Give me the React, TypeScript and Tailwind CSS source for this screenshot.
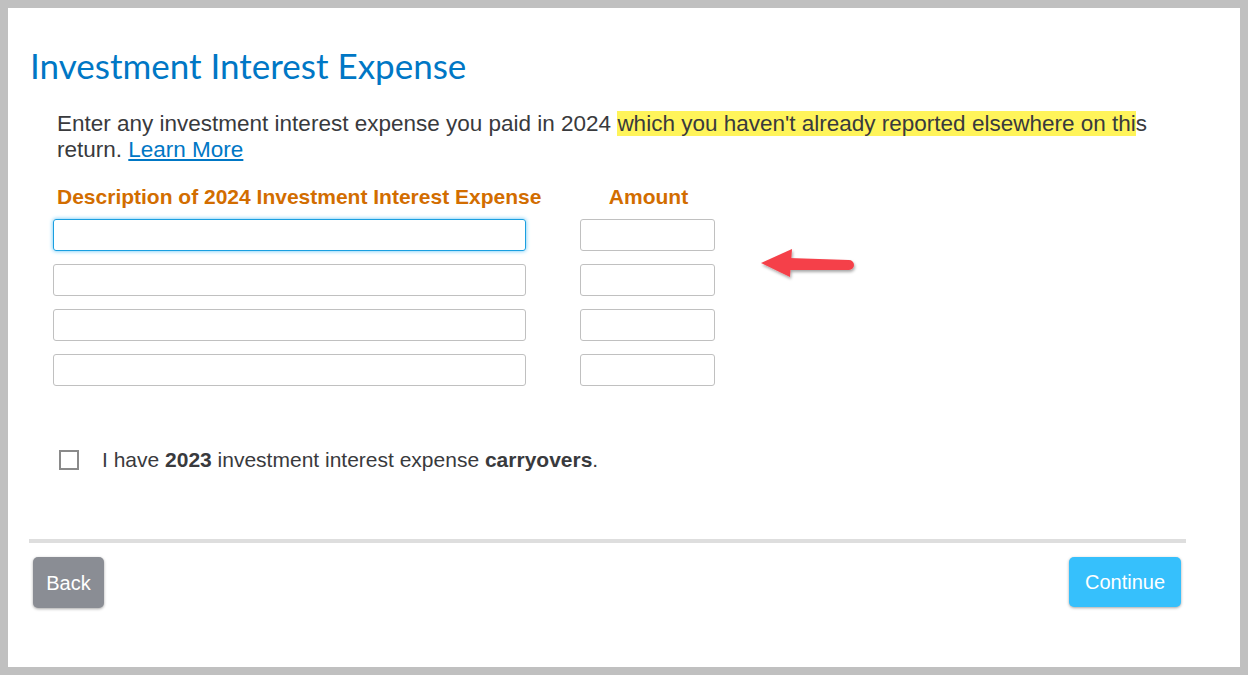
import React from 'react';

const rows = [0, 1, 2, 3];

function Arrow() {
  return (
    <svg width="100" height="40" viewBox="0 0 100 40" className="overflow-visible">
      <defs>
        <filter id="sh" x="-20%" y="-40%" width="140%" height="180%">
          <feDropShadow dx="1" dy="2" stdDeviation="1.5" floodColor="#000" floodOpacity="0.35" />
        </filter>
      </defs>
      <g filter="url(#sh)">
        <path d="M28 18 L88 20 A5 5 0 0 1 88 30 L28 30 Z" fill="#f5414a" />
        <path d="M0 23 L31 9 L29 37 Z" fill="#f5414a" />
      </g>
    </svg>
  );
}

export default function App() {
  return (
    <div className="w-[1248px] h-[675px] bg-[#c0c0c0] p-2" style={{ fontFamily: '"Liberation Sans", Arial, sans-serif' }}>
      <div className="bg-white h-full pl-[22px] pt-[36px]">
        <h1 className="text-[35px] leading-[42px] text-[#0077c5]" style={{ fontFamily: 'Lato, sans-serif' }}>
          Investment Interest Expense
        </h1>

        <p className="mt-[25px] ml-[27px] w-[1110px] text-[22.5px] leading-[25.5px] text-[#393a3d]">
          Enter any investment interest expense you paid in 2024{' '}
          <span className="bg-[#fff45a]">which you haven't already reported elsewhere on thi</span>s return.{' '}
          <a href="#" className="text-[#0077c5] underline">Learn More</a>
        </p>

        <div className="mt-[23px] ml-[23px] flex items-start">
          <div className="w-[473px] flex flex-col">
            <div className="ml-[4px] h-[24px] whitespace-nowrap text-[21px] font-bold text-[#d26d00] leading-[24px]">
              Description of 2024 Investment Interest Expense
            </div>
            <div className="mt-[10px] flex flex-col gap-[13px]">
              {rows.map((r) => (
                <input
                  key={r}
                  className={
                    r === 0
                      ? 'w-[473px] h-[32px] rounded-[3px] border-[1.5px] border-[#1a9fe0] shadow-[0_0_4px_#5fc3f5] outline-none'
                      : 'w-[473px] h-[32px] rounded-[3px] border-[1.5px] border-[#c0c0c0] outline-none'
                  }
                />
              ))}
            </div>
          </div>
          <div className="ml-[54px] w-[135px] flex flex-col">
            <div className="h-[24px] text-center text-[21px] font-bold text-[#d26d00] leading-[24px] pl-[2px]">Amount</div>
            <div className="mt-[10px] flex flex-col gap-[13px]">
              {rows.map((r) => (
                <input key={r} className="w-[135px] h-[32px] rounded-[3px] border-[1.5px] border-[#c0c0c0] outline-none" />
              ))}
            </div>
          </div>
          <div className="ml-[46px] mt-[55px]">
            <Arrow />
          </div>
        </div>

        <label className="mt-[62px] ml-[29px] flex items-center gap-[23px] text-[21px] leading-[24px] text-[#393a3d]">
          <span className="w-[20px] h-[20px] border-2 border-[#8a8a8a] bg-white" />
          <span>
            I have <b>2023</b> investment interest expense <b>carryovers</b>.
          </span>
        </label>

        <div className="mt-[67px] mr-[54px] ml-[-1px] h-[4px] bg-[#dedede]" />

        <div className="mt-[14px] ml-[3px] mr-[59px] flex justify-between">
          <button className="h-[51px] w-[71px] rounded-[5px] bg-[#8a8d94] text-[20px] text-white shadow-[0_1px_3px_rgba(0,0,0,0.35)]">
            Back
          </button>
          <button className="h-[50px] w-[112px] rounded-[5px] bg-[#36c0fc] text-[20px] text-white shadow-[0_1px_3px_rgba(0,0,0,0.35)]">
            Continue
          </button>
        </div>
      </div>
    </div>
  );
}
